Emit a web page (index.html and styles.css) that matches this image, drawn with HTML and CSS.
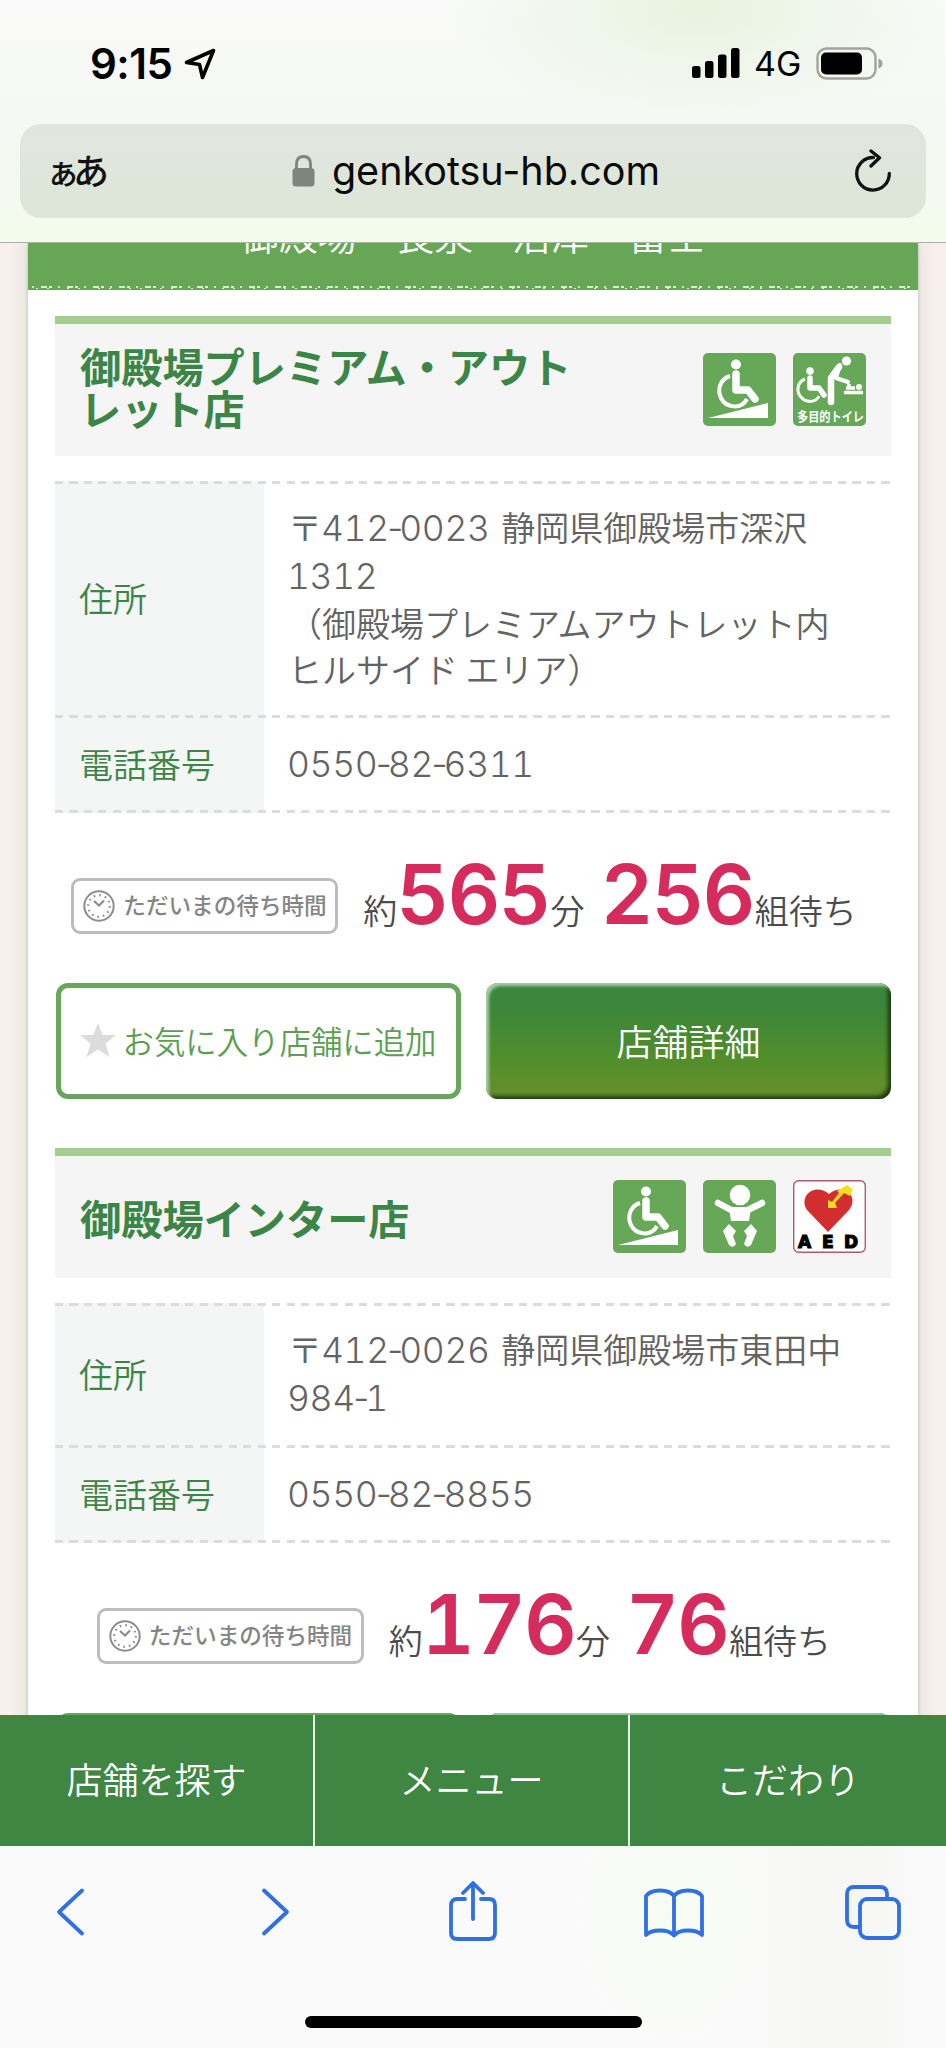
FILE: index.html
```html
<!DOCTYPE html>
<html lang="ja">
<head>
<meta charset="utf-8">
<title>genkotsu-hb.com</title>
<link rel="stylesheet" href="styles.css">
</head>
<body>
<svg class="defs" width="0" height="0">
  <symbol id="ramp" viewBox="0 0 73 73">
    <rect width="73" height="73" rx="5" fill="#66a857"/>
    <circle cx="33" cy="11.500" r="5" fill="#fff"/>
    <path d="M33 21V37H45L52 46" fill="none" stroke="#fff" stroke-width="7.500" stroke-linecap="round" stroke-linejoin="round"/>
    <path d="M27 23C17 26 14 37 18 45C23 55 38 57 44 46" fill="none" stroke="#fff" stroke-width="4"/>
    <path d="M5 65L65 50V65Z" fill="#fff"/>
  </symbol>
  <symbol id="toilet" viewBox="0 0 73 73">
    <rect width="73" height="73" rx="5" fill="#66a857"/>
    <circle cx="17" cy="18" r="3.800" fill="#fff"/>
    <path d="M17 25V35H26L31 42" fill="none" stroke="#fff" stroke-width="5.500" stroke-linecap="round" stroke-linejoin="round"/>
    <path d="M12 26C4 29 3 39 8 44C13 50 23 50 26 43" fill="none" stroke="#fff" stroke-width="3"/>
    <circle cx="53.500" cy="8" r="4.600" fill="#fff"/>
    <path d="M46 14L38 25V49" fill="none" stroke="#fff" stroke-width="6.500" stroke-linecap="round" stroke-linejoin="round"/>
    <path d="M47 12L43 25L55 29" fill="none" stroke="#fff" stroke-width="4" stroke-linecap="round" stroke-linejoin="round"/>
    <path d="M51 39.500H70M53 35H62M56 31V35" fill="none" stroke="#fff" stroke-width="3.500"/>
    <circle cx="66" cy="34" r="3" fill="#fff"/>
    <text x="4" y="67.500" textLength="67" lengthAdjust="spacingAndGlyphs" class="toilet-label">多目的トイレ</text>
  </symbol>
  <symbol id="baby" viewBox="0 0 73 73">
    <rect width="73" height="73" rx="5" fill="#66a857"/>
    <circle cx="37" cy="15" r="10.300" fill="#fff"/>
    <path d="M15 23L30 31H43L59 23" fill="none" stroke="#fff" stroke-width="6.500" stroke-linecap="round"/>
    <path d="M26 27H48L46 41H28Z" fill="#fff"/>
    <path d="M26 44L33 51L30 56L33 64Q30 69 26 65L20 51Z M48 44L41 51L44 56L41 64Q44 69 48 65L54 51Z" fill="#fff"/>
  </symbol>
  <symbol id="clock" viewBox="0 0 32 32">
    <circle cx="16" cy="16" r="14.700" fill="none" stroke="#8c8c8c" stroke-width="2"/>
    <circle cx="16" cy="16" r="10.800" fill="none" stroke="#8c8c8c" stroke-width="2.200" stroke-dasharray="1.600 4.050"/>
    <path d="M11 11L16 15.500L21 10.500" fill="none" stroke="#8c8c8c" stroke-width="2.200"/>
  </symbol>
</svg>

<div class="phone">
  <header class="top">
    <div class="status">
      <span class="time">9:15</span>
      <svg class="arrow" width="32" height="32" viewBox="0 0 32 32"><path d="M29.500 2.500L2.500 14.500L15.500 16.500L18.500 29.500Z" fill="none" stroke="#000" stroke-width="3.600" stroke-linejoin="round"/></svg>
      <svg class="bars" width="49" height="31" viewBox="0 0 49 31"><rect x="0" y="18" width="8.500" height="12" rx="2.500"/><rect x="13" y="13" width="8.500" height="17" rx="2.500"/><rect x="26" y="6.500" width="8.500" height="23.500" rx="2.500"/><rect x="39" y="0" width="8.500" height="30" rx="2.500"/></svg>
      <span class="net">4G</span>
      <svg class="battery" width="68" height="34" viewBox="0 0 68 34"><rect x="1.500" y="1.500" width="58" height="30" rx="9" fill="none" stroke="#a0a59c" stroke-width="2.400"/><rect x="5" y="5.500" width="41" height="22" rx="5"/><path d="M62.500 11.500Q66.500 13 66.500 16.500T62.500 21.500Z" fill="#9da299"/></svg>
    </div>
    <div class="url">
      <div class="aa"><span class="aa-small">ぁ</span><span>あ</span></div>
      <div class="site">
        <svg width="23" height="32" viewBox="0 0 23 32"><rect x="0.500" y="13" width="22" height="18.500" rx="3.500" fill="#7f857c"/><path d="M4.500 14V9Q4.500 1.500 11.500 1.500T18.500 9V14" fill="none" stroke="#7f857c" stroke-width="2.800"/></svg>
        <span class="domain">genkotsu-hb.com</span>
      </div>
      <svg class="reload" width="40" height="44" viewBox="0 0 40 44"><path d="M20.500 8.500A16.300 16.300 0 1 0 36.300 24.500" fill="none" stroke="#111" stroke-width="3.300" stroke-linecap="round"/><path d="M18 2L26.500 8.800L18 17" fill="none" stroke="#111" stroke-width="3.300" stroke-linecap="round" stroke-linejoin="round"/></svg>
    </div>
  </header>

  <main class="content">
    <div class="card">
      <div class="banner"><p>御殿場　長泉　沼津　富士</p></div>

      <section class="shop">
        <div class="head tall">
          <h2>御殿場プレミアム・アウト<br>レット店</h2>
          <div class="icons"><svg><use href="#ramp"/></svg><svg><use href="#toilet"/></svg></div>
        </div>
        <div class="info">
          <div class="row r4"><div class="th">住所</div><div class="td"><p>〒<i class="zip">412<s>-</s>0023</i> 静岡県御殿場市深沢</p><p><i>1312</i></p><p>（御殿場プレミアムアウトレット内</p><p>ヒルサイド エリア）</p></div></div>
          <div class="row r1"><div class="th">電話番号</div><div class="td"><p><i>0550<s>-</s>82<s>-</s>6311</i></p></div></div>
        </div>
        <div class="wait">
          <div class="badge"><svg width="32" height="32"><use href="#clock"/></svg><span>ただいまの待ち時間</span></div>
          <p class="count">約<b>565</b>分<b class="groups">256</b>組待ち</p>
        </div>
        <div class="buttons">
          <a class="fav"><svg width="36" height="35" viewBox="0 0 36 35"><path d="M18 0L22.700 12H36L25.500 20.500L29.500 34L18 26.500L6.500 34L10.500 20.500L0 12H13.300Z" fill="#dcdcdc"/></svg><span>お気に入り店舗に追加</span></a>
          <a class="detail">店舗詳細</a>
        </div>
      </section>

      <section class="shop">
        <div class="head">
          <h2>御殿場インター店</h2>
          <div class="icons"><svg><use href="#ramp"/></svg><svg><use href="#baby"/></svg>
            <svg viewBox="0 0 73 73"><rect x="0.700" y="0.700" width="71.600" height="71.600" rx="5" fill="#fff" stroke="#ad5b70" stroke-width="1.400"/><path d="M35 52L14 30C5 16 22 2 36 14C50 2 67 16 56 30Z" fill="#d32e2f"/><path d="M54 5L59 9L62 3L57 16L51 13L42 23L44 28L35 28L35 20L39 22L46 13L44 11Z" fill="#f8dc22"/><text x="5 29 51" y="67.500" class="aed-label">AED</text></svg>
          </div>
        </div>
        <div class="info">
          <div class="row r2"><div class="th">住所</div><div class="td"><p>〒<i class="zip">412<s>-</s>0026</i> 静岡県御殿場市東田中</p><p><i>984<s>-</s>1</i></p></div></div>
          <div class="row r1"><div class="th">電話番号</div><div class="td"><p><i>0550<s>-</s>82<s>-</s>8855</i></p></div></div>
        </div>
        <div class="wait">
          <div class="badge"><svg width="32" height="32"><use href="#clock"/></svg><span>ただいまの待ち時間</span></div>
          <p class="count">約<b>176</b>分<b class="groups">76</b>組待ち</p>
        </div>
        <div class="buttons"><a class="fav"></a><a class="detail"></a></div>
      </section>
    </div>
  </main>

  <nav class="menu"><a>店舗を探す</a><a>メニュー</a><a>こだわり</a></nav>

  <footer class="toolbar">
    <div class="tools">
      <svg width="30" height="60" viewBox="0 0 30 60"><path d="M27 9.500L4 31L27 52.500"/></svg>
      <svg class="forward" width="30" height="60" viewBox="0 0 30 60"><path d="M3 9.500L26 31L3 52.500"/></svg>
      <svg class="share" width="48" height="60" viewBox="0 0 48 60"><path d="M16 18H8Q2 18 2 24V52Q2 58 8 58H40Q46 58 46 52V24Q46 18 40 18H32M24 38V3M14 12L24 2L34 12"/></svg>
      <svg class="book" width="60" height="60" viewBox="0 0 60 60"><path d="M30 15Q26 9.500 16 9.500T2 15V54Q6 49.500 16 49.500T30 54.500Q34 49.500 44 49.500T58 54V15Q54 9.500 44 9.500T30 15V54"/></svg>
      <svg class="tabs" width="56" height="60" viewBox="0 0 56 60"><path d="M14.500 46H9Q2 46 2 39V13Q2 6 9 6H35Q42 6 42 13V18"/><rect x="15" y="18" width="39" height="39" rx="7"/></svg>
    </div>
    <div class="home"></div>
  </footer>
</div>
</body>
</html>
```

FILE: styles.css
```css
* { box-sizing: border-box; }
body { margin: 0; font-family: "Noto Sans CJK JP", sans-serif; }
p, h2 { margin: 0; }
i { font-style: normal; }
.defs { position: absolute; }
.phone { width: 946px; height: 2048px; display: flex; flex-direction: column; overflow: hidden; background: #fafafa; }

/* browser chrome */
.top { height: 243px; flex: none; border-bottom: 1.500px solid #abb3a8; background: radial-gradient(ellipse 260px 110px at 700px 10px, #e8f3df, #e8f3df00), linear-gradient(180deg, #f9faf9 0, #f6f8f4 50%, #f3fbec 100%); }
.status { height: 124px; padding: 3px 62px 0 90px; display: flex; align-items: center; }
.time { font: 600 42px/50px Inter, sans-serif; letter-spacing: -0.500px; width: 94px; white-space: nowrap; }
.arrow { margin-right: auto; }
.bars { margin-right: 13px; }
.net { font: 400 34px/50px Inter, sans-serif; width: 62px; white-space: nowrap; }
.battery { flex: none; }
.url { height: 94px; margin: 0 20px; border-radius: 21px; padding: 0 33px 0 29px; display: flex; align-items: center; justify-content: space-between; background: linear-gradient(180deg, #e2e5e0, #dce7d6); }
.aa { font-size: 36px; line-height: 50px; font-weight: 500; color: #111; display: flex; align-items: baseline; width: 80px; padding-bottom: 2px; }
.aa-small { width: 27px; font-size: 34px; margin-left: -3px; }
.site { display: flex; align-items: center; gap: 17px; padding-left: 10px; }
.domain { font: 400 39.500px/50px Inter, sans-serif; color: #0a0a0a; }
.reload { margin-left: 40px; }

/* page body */
.content { flex: 1; min-height: 0; overflow: hidden; padding: 0 28px; background: #f7f0ed; }
.card { width: 890px; height: 1500px; background: #fff; box-shadow: 0 0 3px #b5b8b0, 0 0 18px #d8d8d0; }
.banner { height: 47px; background: repeating-linear-gradient(90deg, #c4e4b8 0 2px, transparent 2px 9px, #d9efd0 9px 15px, transparent 15px 17px, #d9efd0 17px 20px, transparent 20px 26px) 4px 43px / 882px 2px no-repeat, repeating-linear-gradient(90deg, #d9efd0 0 2px, transparent 2px 11px, #d9efd0 11px 13px, transparent 13px 31px) 8px 45px / 874px 1px no-repeat, #66a655; overflow: hidden; text-align: center; }
.banner p { color: #fff; font-size: 38.800px; line-height: 48px; font-weight: 350; margin-top: -34px; }
.shop { padding: 26px 27px 0; }
.shop + .shop { padding-top: 49px; }
.head { height: 130px; border-top: 8px solid #a4ce8e; background: #f5f5f5; padding: 0 25px; display: flex; justify-content: space-between; align-items: center; }
.head.tall { height: 140px; }
.head h2 { color: #3b8646; font-size: 41.200px; line-height: 42px; font-weight: 700; white-space: nowrap; }
.head.tall h2 { padding-bottom: 9px; }
.icons { display: flex; gap: 17px; margin-top: -1px; }
.icons svg { width: 73px; height: 73px; }
.toilet-label { font: 700 13px "Noto Sans CJK JP", sans-serif; fill: #fff; }
.aed-label { font: 700 17px "DejaVu Sans", sans-serif; fill: #000; stroke: #000; stroke-width: 1.200px; }
.info { margin-top: 24.500px; font-size: 34px; line-height: 46px; font-weight: 350; color: #636363; }
.row { display: flex; align-items: center; background: repeating-linear-gradient(90deg, #dadddc 0 8px, transparent 8px 14.500px) 0 0 / 100% 3px no-repeat, linear-gradient(90deg, #f4f5f5 209px, #fff 209px); }
.row:last-child { background: repeating-linear-gradient(90deg, #dadddc 0 8px, transparent 8px 14.500px) 0 0 / 100% 3px no-repeat, repeating-linear-gradient(90deg, #dadddc 0 8px, transparent 8px 14.500px) 0 100% / 100% 3px no-repeat, linear-gradient(90deg, #f4f5f5 209px, #fff 209px); }
.r4 { height: 234px; }
.r2 { height: 142px; }
.r1 { height: 98px; }
.th { width: 209px; padding-left: 24px; color: #3b8646; }
.td { padding-left: 24px; white-space: nowrap; }
.td i { font-family: Inter, sans-serif; font-size: 35.500px; font-weight: 300; font-feature-settings: "tnum"; letter-spacing: -0.400px; margin-left: -1px; }
.td .zip { margin: 0 4px 0 -1px; }
.td s { text-decoration: none; font-feature-settings: normal; letter-spacing: -5.500px; margin-left: -1.500px; margin-right: 1.500px; }
.wait { height: 170.500px; display: flex; justify-content: center; padding: 65.500px 18px 0 0; gap: 25px; }
.badge { width: 267px; height: 56px; flex: none; border: 3px solid #bdbdbd; border-radius: 9px; display: flex; align-items: center; gap: 8px; padding-left: 9px; color: #858585; font-size: 22.600px; line-height: 48px; font-weight: 500; white-space: nowrap; }
.badge span { padding-bottom: 2px; }
.count { height: 60px; margin-top: -13px; font-size: 34px; line-height: 60px; font-weight: 350; color: #4c4c4c; white-space: nowrap; }
.count b { font: 600 82px/60px Inter, sans-serif; font-feature-settings: "tnum"; color: #d52b5d; letter-spacing: -2px; margin: 0 1px 0 -1px; }
.count .groups { margin-left: 16px; }
.buttons { display: flex; justify-content: space-between; }
.buttons a { width: 405px; height: 116px; border-radius: 12px; display: flex; align-items: center; justify-content: center; padding-bottom: 3px; }
.buttons .fav { border: 5px solid #68a65c; margin-left: 1px; padding: 0 1px 2px 0; gap: 7px; color: #5c9f52; font-size: 31.400px; font-weight: 350; white-space: nowrap; }
.buttons .detail { background: linear-gradient(180deg, #39883d 0, #3d863a 25%, #518e2c 65%, #688f2b 100%); box-shadow: inset 3px 3px 3px #a6cba8, inset -3px -3px 4px #1e3910; color: #fff; font-size: 36px; font-weight: 350; }

/* fixed menu */
.menu { height: 131px; flex: none; display: grid; grid-template-columns: 315px 315px 316px; background: #3e8641; }
.menu a { display: flex; align-items: center; justify-content: center; color: #fff; font-size: 36px; font-weight: 350; border-right: 2px solid #e6f5e4; padding: 0 0 6px; }
.menu a:last-child { border: 0; }

/* browser toolbar */
.toolbar { height: 202px; flex: none; background: radial-gradient(ellipse 100px 140px at 670px 70px, #f6fcf3, #f6fcf300), linear-gradient(90deg, #fafafa 75%, #f6f6f5 90%, #fafafa); display: flex; flex-direction: column; justify-content: space-between; align-items: center; padding: 35px 0 20px; }
.tools { width: 100%; display: flex; padding-left: 55px; }
.tools svg { fill: none; stroke: #2f70e2; stroke-width: 3.800px; stroke-linecap: round; stroke-linejoin: round; }
.tools .forward { margin-left: 176px; }
.tools .share { margin-left: 158px; }
.tools .book { margin-left: 147px; }
.tools .tabs { margin-left: 141px; }
.home { width: 337px; height: 12px; border-radius: 6px; background: #000; }
```
